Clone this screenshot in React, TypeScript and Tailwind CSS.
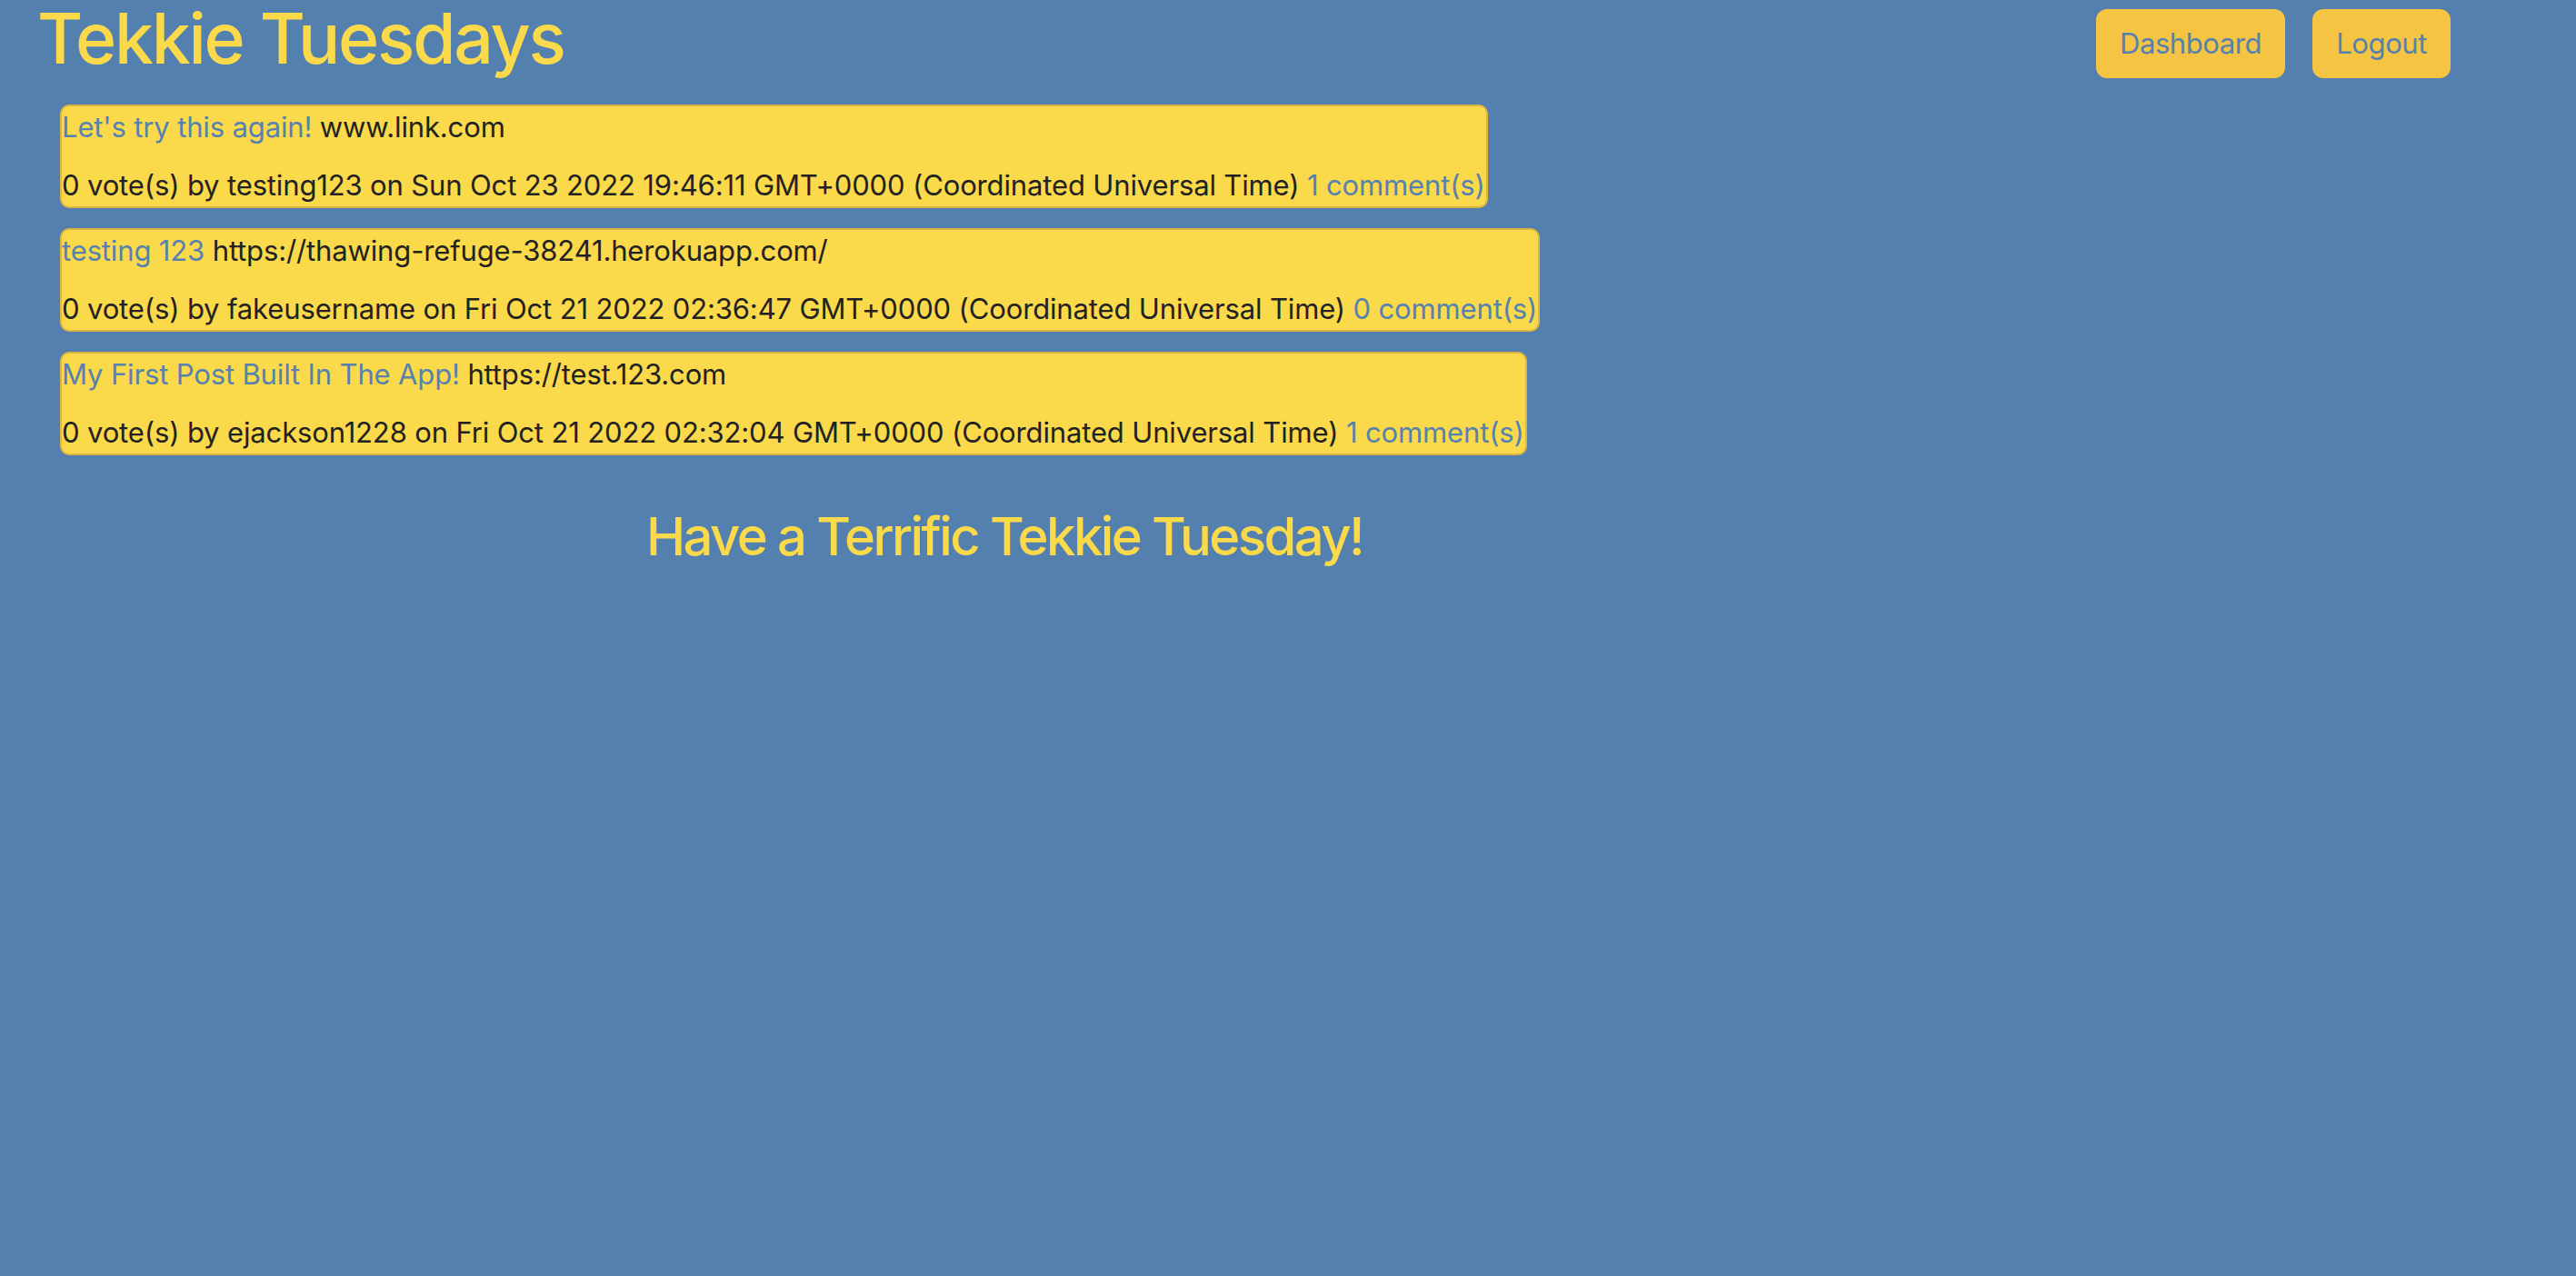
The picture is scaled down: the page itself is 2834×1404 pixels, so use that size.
import React from "react";

type Post = {
  title: string;
  url: string;
  author: string;
  date: string;
  comments: number;
};

const posts: Post[] = [
  {
    title: "Let's try this again!",
    url: "www.link.com",
    author: "testing123",
    date: "Sun Oct 23 2022 19:46:11 GMT+0000 (Coordinated Universal Time)",
    comments: 1,
  },
  {
    title: "testing 123",
    url: "https://thawing-refuge-38241.herokuapp.com/",
    author: "fakeusername",
    date: "Fri Oct 21 2022 02:36:47 GMT+0000 (Coordinated Universal Time)",
    comments: 0,
  },
  {
    title: "My First Post Built In The App!",
    url: "https://test.123.com",
    author: "ejackson1228",
    date: "Fri Oct 21 2022 02:32:04 GMT+0000 (Coordinated Universal Time)",
    comments: 1,
  },
];

function PostCard({ post }: { post: Post }) {
  return (
    <div className="w-fit rounded-[10px] border-2 border-[#dcb640] bg-[#fad94a] pt-[5px] pb-[5px] pr-[1px] text-[31px] leading-[36px] tracking-[-0.14px] text-[#222222]">
      <div className="whitespace-nowrap">
        <a href="#" className="text-[#5681b0]">
          {post.title}
        </a>{" "}
        <span>{post.url}</span>
      </div>
      <div className="mt-[28px] whitespace-nowrap">
        {"0 vote(s) by "}
        {post.author}
        {" on "}
        {post.date}{" "}
        <a href="#" className="text-[#5681b0]">
          {post.comments} comment(s)
        </a>
      </div>
    </div>
  );
}

export default function App() {
  return (
    <div className="min-h-screen w-full bg-[#5480b0] font-[family-name:Inter,sans-serif]">
      <header className="flex items-start justify-between pl-[41px] pr-[138px]">
        <h1 className="text-[77px] leading-[84px] font-medium text-[#fad94a] tracking-[-2.3px]">
          Tekkie Tuesdays
        </h1>
        <nav className="flex gap-[30px] pt-[10px]">
          <button className="h-[76px] rounded-[12px] bg-[#f5c443] px-[26px] text-[31px] tracking-[-0.4px] text-[#5681b0]">
            Dashboard
          </button>
          <button className="h-[76px] rounded-[12px] bg-[#f5c443] px-[26px] text-[31px] tracking-[-0.4px] text-[#5681b0]">
            Logout
          </button>
        </nav>
      </header>
      <main className="flex flex-col gap-[22px] pl-[66px] pt-[29px]">
        {posts.map((p) => (
          <PostCard key={p.title} post={p} />
        ))}
      </main>
      <footer className="mt-[54px] w-[2210px] text-center">
        <h2 className="text-[58px] leading-[70px] font-medium text-[#fad94a] tracking-[-2.6px]">
          Have a Terrific Tekkie Tuesday!
        </h2>
      </footer>
    </div>
  );
}
